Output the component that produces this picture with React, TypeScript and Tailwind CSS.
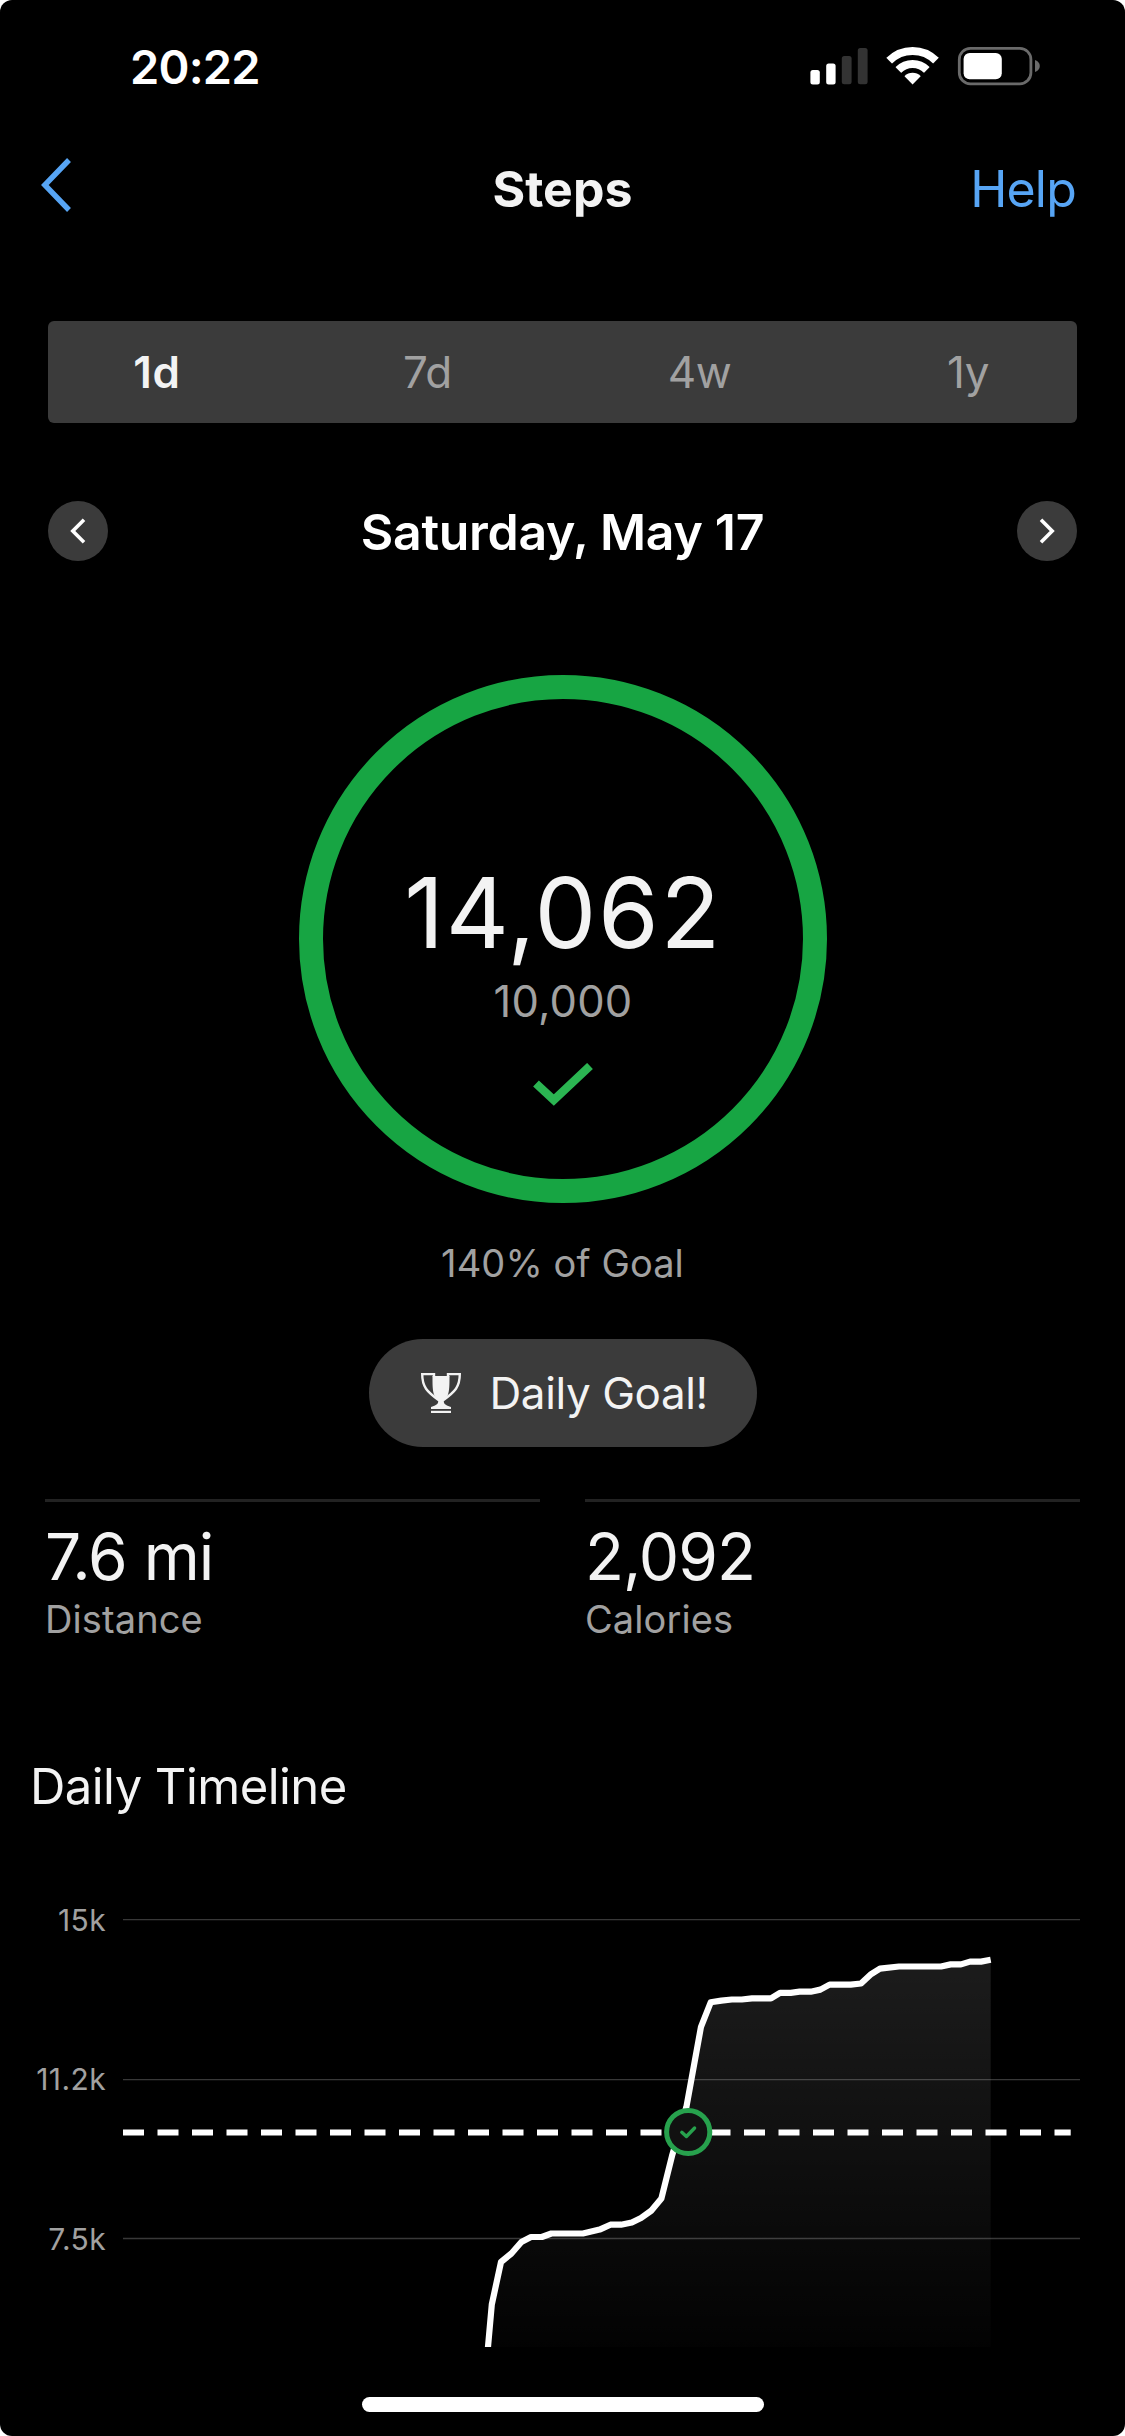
import React from "react";

const ranges = ["1d", "7d", "4w", "1y"];

const stats = [
    { value: "7.6 mi", label: "Distance" },
    { value: "2,092", label: "Calories" },
];

// cumulative steps over the day, in chart units
const points = [
    [364.8, 469], [368.8, 424.5], [378, 382], [388.4, 373.5], [398.4, 362], [408, 357], [418.8, 357], [428.4, 353.5],
    [459.9, 353.5], [476.6, 349.6], [487.4, 344.7], [498, 344.7], [508.8, 342.5], [518, 338], [528, 330.9],
    [538.4, 318.4], [549, 275.9], [563.4, 227], [578, 146.8], [587.7, 122.3], [598.4, 120.6], [608.8, 119.5],
    [618.8, 119.5], [629, 118.4], [648, 118.4], [657, 112.8], [667.7, 112.8], [676.6, 111.7], [687.7, 111.7],
    [697.4, 109.6], [706.6, 104.6], [727.7, 104.6], [738, 103.5], [747.4, 94.7], [757, 88.7], [776, 86.5],
    [818, 86.5], [827.7, 84.4], [838, 84.4], [847, 81.6], [858, 81.6], [867.7, 79.8],
];

const linePath = "M" + points.map((p) => p.join(" ")).join("L");

const StatusBar = () => (
    <div className="flex h-[134px] items-center justify-between pl-[130px] pr-[85px]">
        <span className="-mt-[2px] text-[47px] font-semibold leading-none tracking-[-0.8px]">20:22</span>
        <svg width="230" height="40" viewBox="0 0 230 40" fill="#fff">
            <rect x="0.4" y="23" width="9.4" height="14.5" rx="2.5" />
            <rect x="16.2" y="16.4" width="9.4" height="21" rx="2.5" />
            <rect x="31.8" y="9" width="9.8" height="28.3" rx="2.5" fill="#333" />
            <rect x="47.8" y="1" width="9.8" height="36.3" rx="2.5" fill="#333" />
            <clipPath id="fan">
                <path d="M102.6 37.5L76 10.4V-2H129V10.4Z" />
            </clipPath>
            <g clipPath="url(#fan)">
                <circle cx="102.6" cy="37" r="33" fill="none" stroke="#fff" strokeWidth="8" />
                <circle cx="102.6" cy="37" r="20" fill="none" stroke="#fff" strokeWidth="8" />
                <circle cx="102.6" cy="37" r="11.3" />
            </g>
            <rect x="149.3" y="1.4" width="71.6" height="35.4" rx="11" fill="none" stroke="#6a6a6a" strokeWidth="2.8" />
            <rect x="153.6" y="6" width="38.2" height="26.2" rx="6" />
            <path d="M225 13q4.8 1.8 4.8 6t-4.8 6z" fill="#6a6a6a" />
        </svg>
    </div>
);

const Header = () => (
    <div className="grid h-[110px] grid-cols-3 items-center px-[47px] text-[50px] leading-none">
        <svg className="-ml-[6px] -mt-2" width="30" height="54" viewBox="0 0 30 54" fill="none">
            <path d="M28 2L3.8 27L28 52" stroke="#57a5f5" strokeWidth="5.4" />
        </svg>
        <h1 className="text-center font-bold text-[#f3f3f3]">Steps</h1>
        <span className="pr-[2px] text-right tracking-[-0.8px] text-[#57a5f5]">Help</span>
    </div>
);

const ArrowButton = ({ flip }: { flip?: boolean }) => (
    <button className="flex size-[60px] items-center justify-center rounded-full bg-[#3b3b3b]">
        <svg className={flip ? "rotate-180" : ""} width="18" height="26" viewBox="0 0 18 26" fill="none">
            <path d="M15 1.8L3.8 13L15 24.2" stroke="#fff" strokeWidth="3.6" />
        </svg>
    </button>
);

const GoalRing = () => (
    <div className="ml-[299px] mt-[114px] flex size-[528px] shrink-0 flex-col items-center rounded-full border-[24px] border-[#17a543]">
        <span className="mt-[154px] text-[98px] leading-[120px] tracking-[1.6px] text-[#f3f3f3]">14,062</span>
        <span className="mt-[3px] text-[43.5px] leading-[50px] tracking-[0.2px] text-[#a1a1a1]">10,000</span>
        <svg className="mt-[37px]" width="60" height="44" viewBox="0 0 60 44" fill="none">
            <path d="M3 20.5L20.8 37L57 3" stroke="#2bb552" strokeWidth="8.4" />
        </svg>
    </div>
);

const Trophy = () => (
    <svg width="40" height="40" viewBox="0 0 40 40" fill="#f3f3f3">
        <path d="M11.5 3H28.5C28.5 11 28.6 18 26.6 22.4C25.4 25 22.8 26 22.8 28.4C22.8 31.5 26 32.4 30 34V36H10V34C14 32.4 17.2 31.5 17.2 28.4C17.2 26 14.6 25 13.4 22.4C11.4 18 11.5 11 11.5 3Z" />
        <path d="M13 4V1.1H1.2C1.2 14 6 18.5 17.5 27M27 4V1.1H38.8C38.8 14 34 18.5 22.5 27" fill="none" stroke="#f3f3f3" strokeWidth="2.4" />
        <rect x="10" y="37.8" width="20" height="2.2" />
    </svg>
);

const Timeline = () => (
    <div className="mt-[83px] flex">
        <div className="flex h-[359px] w-[106px] flex-col justify-between text-right text-[30px] leading-10 tracking-[0.4px] text-[#a1a1a1]">
            <span>15k</span>
            <span className="-mt-[2px]">11.2k</span>
            <span>7.5k</span>
        </div>
        <svg className="ml-[17px]" width="957" height="447" viewBox="0 20 957 447" fill="none">
            <defs>
                <linearGradient id="area" x1="0" y1="80" x2="0" y2="466" gradientUnits="userSpaceOnUse">
                    <stop stopColor="#fff" stopOpacity="0.11" />
                    <stop offset="1" stopColor="#fff" stopOpacity="0.01" />
                </linearGradient>
            </defs>
            <path d={linePath + "V469Z"} fill="url(#area)" />
            <path d={linePath} stroke="#fff" strokeWidth="6.2" strokeLinejoin="round" />
            <path d="M0 39.7H957M0 199.6H957M0 358.5H957" stroke="#fff" strokeOpacity="0.22" strokeWidth="1.3" />
            <path d="M0 252.5H947.7" stroke="#fff" strokeWidth="6.2" strokeDasharray="21 13.5" />
            <circle cx="565.2" cy="252" r="21.6" fill="#111" stroke="#27a14d" strokeWidth="5" />
            <path d="M558.8 252.3L563.4 256.5L571.6 248" stroke="#27a14d" strokeWidth="3.4" strokeLinecap="round" strokeLinejoin="round" />
        </svg>
    </div>
);

const App = () => {
    return (
        <div className="min-h-[2436px] w-[1125px] bg-white">
            <div className="flex h-[2436px] flex-col overflow-hidden rounded-[12px] bg-black font-['Inter',sans-serif] text-white">
                <StatusBar />
                <Header />
                <div className="mx-12 mt-[77px] flex h-[102px] items-center justify-between rounded-[6px] bg-[#3b3b3b] px-[79px] text-[44px] tracking-[-0.4px] text-[#a1a1a1]">
                    {ranges.map((range, i) => (
                        <span key={range} className={i === 0 ? "w-[60px] text-center font-semibold tracking-[0.6px] text-[#f3f3f3]" : "w-[60px] text-center"}>
                            {range}
                        </span>
                    ))}
                </div>
                <div className="mx-12 mt-[78px] flex items-center justify-between">
                    <ArrowButton />
                    <h2 className="mt-0.5 text-[50px] font-semibold leading-none tracking-[-0.3px]">Saturday, May 17</h2>
                    <ArrowButton flip />
                </div>
                <GoalRing />
                <p className="mt-10 text-center text-[38px] leading-10 tracking-[0.1px] text-[#a1a1a1]">140% of Goal</p>
                <div className="mx-auto mt-[56px] flex h-[108px] w-[388px] shrink-0 items-center rounded-full bg-[#3b3b3b] pl-[52px] text-[44px] text-[#f3f3f3]">
                    <Trophy />
                    <span className="ml-[29px] tracking-[-0.4px]">Daily Goal!</span>
                </div>
                <div className="mt-[52px] grid grid-cols-2 gap-[45px] px-[45px]">
                    {stats.map((stat) => (
                        <div key={stat.label} className="border-t-[3px] border-[#222]">
                            <div className="mt-[19px] text-[64px] leading-[72px] tracking-[-1px] text-[#f3f3f3]">{stat.value}</div>
                            <div className="mt-[6px] text-[38px] leading-[40px] tracking-[0.1px] text-[#a1a1a1]">{stat.label}</div>
                        </div>
                    ))}
                </div>
                <h2 className="ml-[30px] mt-[118px] text-[49px] leading-[60px] tracking-[-0.55px] text-[#f3f3f3]">Daily Timeline</h2>
                <Timeline />
                <div className="mx-auto mt-[50px] h-[15px] w-[402px] shrink-0 rounded-full bg-white" />
            </div>
        </div>
    );
};

export default App;
